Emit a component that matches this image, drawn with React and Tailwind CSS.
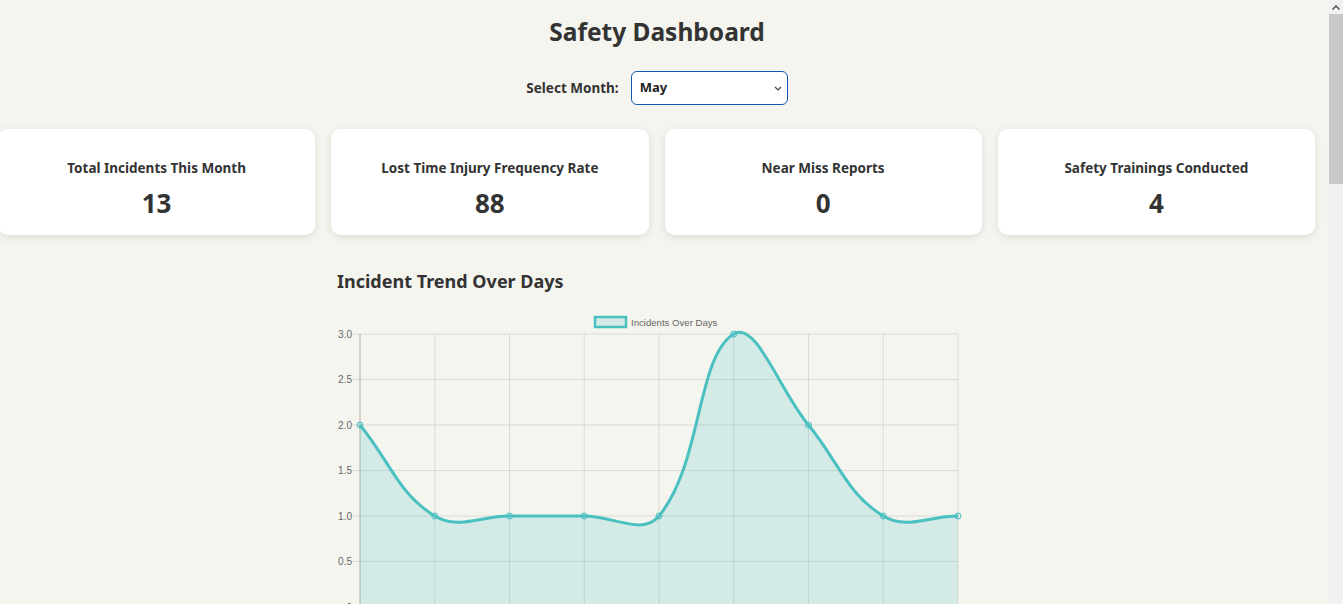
import { useState } from "react";

const stats = [
  { label: "Total Incidents This Month", value: 13 },
  { label: "Lost Time Injury Frequency Rate", value: 88 },
  { label: "Near Miss Reports", value: 0 },
  { label: "Safety Trainings Conducted", value: 4 },
];

const months = [
  "January", "February", "March", "April", "May", "June",
  "July", "August", "September", "October", "November", "December",
];

const data = [2, 1, 1, 1, 1, 3, 2, 1, 1];

// chart geometry (svg coords)
const left = 23;
const right = 621;
const yFor = (v) => 297 - 91 * v;
const step = (right - left) / (data.length - 1);

const buildPath = (pts, tension = 0.4) => {
  const cps = pts.map((cur, i) => {
    const prev = pts[i - 1] || cur;
    const next = pts[i + 1] || cur;
    const d01 = Math.hypot(cur.x - prev.x, cur.y - prev.y);
    const d12 = Math.hypot(next.x - cur.x, next.y - cur.y);
    let s01 = d01 / (d01 + d12);
    let s12 = d12 / (d01 + d12);
    if (isNaN(s01)) s01 = 0;
    if (isNaN(s12)) s12 = 0;
    const fa = tension * s01;
    const fb = tension * s12;
    return {
      prev: { x: cur.x - fa * (next.x - prev.x), y: cur.y - fa * (next.y - prev.y) },
      next: { x: cur.x + fb * (next.x - prev.x), y: cur.y + fb * (next.y - prev.y) },
    };
  });
  let d = `M${pts[0].x},${pts[0].y}`;
  for (let i = 0; i < pts.length - 1; i++) {
    const a = cps[i].next;
    const b = cps[i + 1].prev;
    d += ` C${a.x},${a.y} ${b.x},${b.y} ${pts[i + 1].x},${pts[i + 1].y}`;
  }
  return d;
};

const TrendChart = () => {
  const pts = data.map((v, i) => ({ x: left + i * step, y: yFor(v) }));
  const line = buildPath(pts);
  const area = `${line} L${right},${yFor(0)} L${left},${yFor(0)} Z`;
  const ticks = [3, 2.5, 2, 1.5, 1, 0.5, 0];

  return (
    <svg width="637" height="330" className="block" style={{ fontFamily: '"Liberation Sans", Arial, sans-serif' }}>
      {/* legend */}
      <rect x="258" y="7" width="31" height="10" fill="rgba(75,192,192,0.2)" stroke="rgb(75,192,192)" strokeWidth="2.5" />
      <text x="294" y="15.5" fontSize="9.6" fill="#666">Incidents Over Days</text>

      {/* grid */}
      {ticks.map((t) => (
        <g key={t}>
          <line x1={left - 8} x2={right} y1={yFor(t)} y2={yFor(t)} stroke="rgba(0,0,0,0.1)" />
          <text x="15" y={yFor(t) + 3.5} fontSize="10" fill="#666" textAnchor="end">
            {t === 0 ? "0" : t.toFixed(1)}
          </text>
        </g>
      ))}
      {pts.map((p, i) => (
        <line key={i} x1={p.x} x2={p.x} y1={yFor(3)} y2={yFor(0) + 8} stroke="rgba(0,0,0,0.1)" />
      ))}
      <line x1={left} x2={left} y1={yFor(3)} y2={yFor(0)} stroke="rgba(0,0,0,0.2)" />

      {/* dataset */}
      <path d={area} fill="rgba(75,192,192,0.2)" />
      <path d={line} fill="none" stroke="rgb(75,192,192)" strokeWidth="3" />
      {pts.map((p, i) => (
        <circle key={i} cx={p.x} cy={p.y} r="3" fill="rgba(75,192,192,0.2)" stroke="rgb(75,192,192)" strokeWidth="1" />
      ))}
    </svg>
  );
};

const App = () => {
  const [month, setMonth] = useState("May");

  return (
    <div className="flex h-screen overflow-hidden bg-[#f5f5f0] text-[#333]" style={{ fontFamily: '"Noto Sans", "Open Sans", sans-serif' }}>
      <div className="min-w-0 flex-1 overflow-hidden">
        <h1 className="pr-[15px] pt-[15px] text-center text-[24.5px] font-bold leading-[34px]">Safety Dashboard</h1>

        <div className="mt-[22px] flex items-center justify-center gap-[12px] pr-[15px]">
          <label className="text-[13.5px] font-bold">Select Month:</label>
          <div className="relative">
            <select
              value={month}
              onChange={(e) => setMonth(e.target.value)}
              className="h-[34px] w-[157px] appearance-none rounded-[6px] border-[1.5px] border-[#1457b8] bg-white pl-[8px] text-[13px] font-bold text-[#222] outline-none"
            >
              {months.map((m) => (
                <option key={m} value={m}>{m}</option>
              ))}
            </select>
            <svg className="pointer-events-none absolute right-[6px] top-[15px]" width="8" height="5" viewBox="0 0 8 5">
              <path d="M1 1 L4 4 L7 1" fill="none" stroke="#444" strokeWidth="1.2" />
            </svg>
          </div>
        </div>

        <div className="-ml-[2px] mt-[24px] flex w-[1317px] gap-[16px]">
          {stats.map((s) => (
            <div key={s.label} className="flex h-[106px] flex-1 flex-col items-center justify-center rounded-[10px] bg-white pt-[14px] shadow-[0_2px_8px_rgba(0,0,0,0.1)]">
              <div className="text-[13.5px] font-bold leading-[20px]">{s.label}</div>
              <div className="mt-[8px] text-[26px] font-bold leading-[34px]">{s.value}</div>
            </div>
          ))}
        </div>

        <div className="mx-auto mt-[33px] w-[655px]">
          <h2 className="text-[18px] font-bold leading-[26px]">Incident Trend Over Days</h2>
          <div className="mt-[16px]">
            <TrendChart />
          </div>
        </div>
      </div>

      {/* scrollbar */}
      <div className="flex w-[14px] shrink-0 flex-col bg-[#f1f1f1]">
        <div className="flex h-[14px] items-center justify-center">
          <svg width="8" height="5" viewBox="0 0 8 5">
            <path d="M0.5 4.5 L4 1 L7.5 4.5" fill="none" stroke="#505050" strokeWidth="1.5" />
          </svg>
        </div>
        <div className="mx-auto h-[170px] w-[14px] bg-[#c8c8c8]" />
      </div>
    </div>
  );
};

export default App;
